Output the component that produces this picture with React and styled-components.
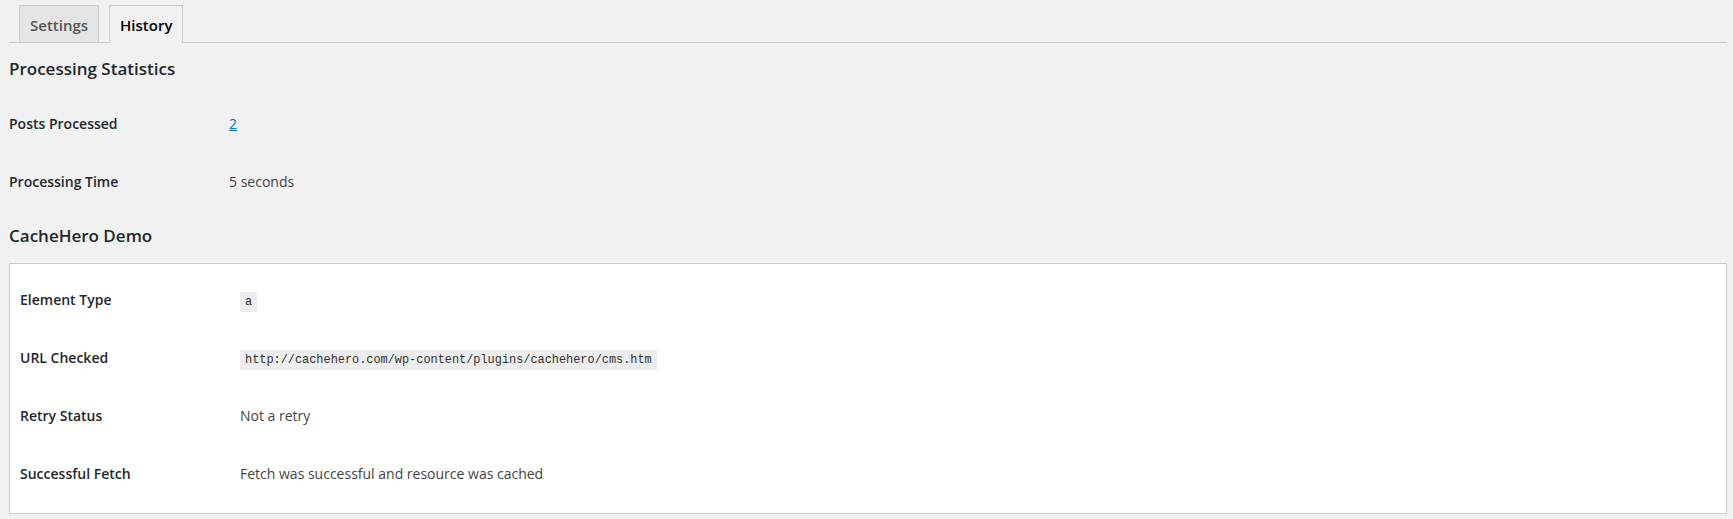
import React from 'react'
import styled, { createGlobalStyle } from 'styled-components'

const GlobalStyle = createGlobalStyle`
  html, body {
    margin: 0;
    background: #f1f1f1;
  }
  body {
    font-family: "Open Sans", "Noto Sans", sans-serif;
    font-size: 13px;
    color: #444;
  }
`

const Wrap = styled.div`
  padding: 5px 6px 0 9px;
`

const TabBar = styled.nav`
  display: flex;
  align-items: flex-end;
  border-bottom: 1px solid #ccc;
`

const Tab = styled.a`
  margin-left: 10px;
  margin-bottom: ${p => (p.$active ? '-1px' : '0')};
  padding: 7px 10px ${p => (p.$active ? '6px' : '5px')};
  border: 1px solid #ccc;
  border-bottom: none;
  background: ${p => (p.$active ? '#f1f1f1' : '#e5e5e5')};
  color: ${p => (p.$active ? '#000' : '#555')};
  font-size: 15px;
  font-weight: 600;
  line-height: 24px;
  text-decoration: none;
  cursor: pointer;
`

const SectionTitle = styled.h2`
  margin: ${p => p.$top}px 0 ${p => p.$bottom}px;
  font-size: 17px;
  line-height: 22px;
  font-weight: 600;
  color: #23282d;
`

const Panel = styled.div`
  background: #fff;
  border: 1px solid #ccc;
  padding: 7px 10px 10px;
`

const FormTable = styled.div`
  display: flex;
  flex-direction: column;
`

const Row = styled.div`
  display: grid;
  grid-template-columns: 220px 1fr;
  height: 58px;
  align-items: start;
`

const Label = styled.div`
  padding-top: 20px;
  font-size: 14px;
  line-height: 18px;
  font-weight: 600;
  color: #23282d;
`

const Value = styled.div`
  padding-top: 20px;
  font-size: 14px;
  line-height: 18px;
  color: #444;
`

const Link = styled.a`
  color: #0073aa;
  text-decoration: underline;
`

const Code = styled.code`
  padding: 3px 5px 3px;
  background: rgba(0, 0, 0, 0.07);
  font-family: "Liberation Mono", "DejaVu Sans Mono", monospace;
  font-size: 11.9px;
  color: #333;
`

const stats = [
  { label: 'Posts Processed', value: <Link href="#">2</Link> },
  { label: 'Processing Time', value: '5 seconds' },
]

const demo = [
  { label: 'Element Type', value: <Code>a</Code> },
  { label: 'URL Checked', value: <Code>http://cachehero.com/wp-content/plugins/cachehero/cms.htm</Code> },
  { label: 'Retry Status', value: 'Not a retry' },
  { label: 'Successful Fetch', value: 'Fetch was successful and resource was cached' },
]

const App = () => {
  return (
    <Wrap>
      <GlobalStyle />
      <TabBar>
        <Tab>Settings</Tab>
        <Tab $active>History</Tab>
      </TabBar>

      <SectionTitle $top={15} $bottom={15}>Processing Statistics</SectionTitle>
      <FormTable>
        {stats.map(r => (
          <Row key={r.label}>
            <Label>{r.label}</Label>
            <Value>{r.value}</Value>
          </Row>
        ))}
      </FormTable>

      <SectionTitle $top={14} $bottom={16}>CacheHero Demo</SectionTitle>
      <Panel>
        <FormTable>
          {demo.map(r => (
            <Row key={r.label}>
              <Label>{r.label}</Label>
              <Value>{r.value}</Value>
            </Row>
          ))}
        </FormTable>
      </Panel>
    </Wrap>
  )
}

export default App
